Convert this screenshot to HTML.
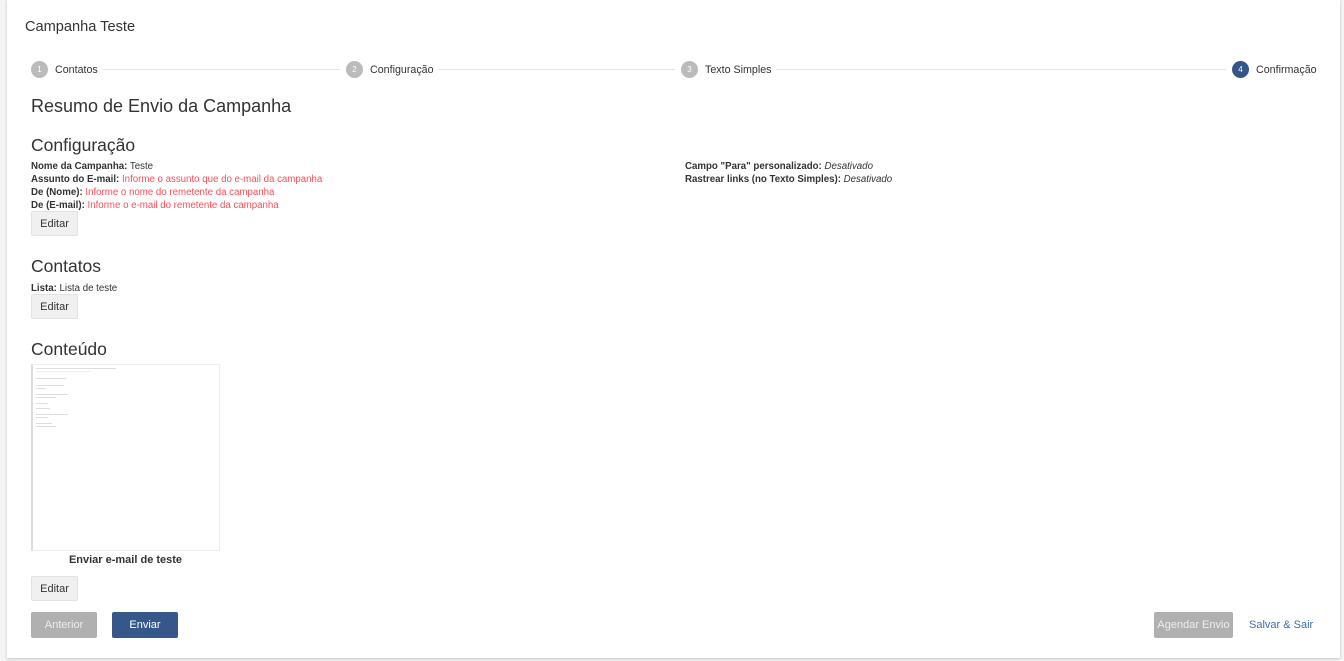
<!DOCTYPE html>
<html><head><meta charset="utf-8"><style>
*{margin:0;padding:0;box-sizing:border-box}
body{width:1344px;height:661px;background:#f4f4f4;font-family:"Liberation Sans",sans-serif;color:#333;position:relative;overflow:hidden}
.card{position:absolute;left:7px;top:0;width:1333px;height:658px;background:#fff;box-shadow:0 1px 3px rgba(0,0,0,.2)}
.a{position:absolute;white-space:nowrap}
.step{position:absolute;top:62px;height:16px;font-size:10.7px;line-height:16px}
.circ{position:absolute;top:61px;width:17px;height:17px;border-radius:50%;background:#bbb;color:#fff;font-size:8px;text-align:center;line-height:17px}
.line{position:absolute;top:69px;height:1px;background:#e3e3e3}
.f{font-size:9.7px;line-height:13px}
.f b{font-weight:bold}
.r{color:#f0525e}
.btn{position:absolute;background:#f0f0f0;border:1px solid #e2e2e2;border-radius:2px;font-size:11px;text-align:center;line-height:25px;width:47px;height:25px;color:#333}
h2{font-weight:normal;font-size:18px}
</style></head><body>
<div class="card"></div>
<div class="a" style="left:25px;top:19px;font-size:14.6px">Campanha Teste</div>

<div class="circ" style="left:31px">1</div><div class="step a" style="left:55px">Contatos</div>
<div class="line" style="left:103px;width:237px"></div>
<div class="circ" style="left:346px">2</div><div class="step a" style="left:370px">Configuração</div>
<div class="line" style="left:438px;width:237px"></div>
<div class="circ" style="left:681px">3</div><div class="step a" style="left:705px">Texto Simples</div>
<div class="line" style="left:776px;width:450px"></div>
<div class="circ" style="left:1232px;background:#34568b">4</div><div class="step a" style="left:1256px">Confirmação</div>

<div class="a" style="left:31px;top:96px;font-size:18px">Resumo de Envio da Campanha</div>
<h2 class="a" style="left:31px;top:135px;font-size:17.5px">Configuração</h2>
<div class="a f" style="left:31px;top:160px"><b>Nome da Campanha:</b> Teste<br><b>Assunto do E-mail:</b> <span class="r">Informe o assunto que do e-mail da campanha</span><br><b>De (Nome):</b> <span class="r">Informe o nome do remetente da campanha</span><br><b>De (E-mail):</b> <span class="r">Informe o e-mail do remetente da campanha</span></div>
<div class="a f" style="left:685px;top:160px"><b>Campo "Para" personalizado:</b> <i>Desativado</i><br><b>Rastrear links (no Texto Simples):</b> <i>Desativado</i></div>
<div class="btn" style="left:31px;top:211px">Editar</div>

<h2 class="a" style="left:31px;top:256px;font-size:17.5px">Contatos</h2>
<div class="a f" style="left:31px;top:282px"><b>Lista:</b> Lista de teste</div>
<div class="btn" style="left:31px;top:294px">Editar</div>

<h2 class="a" style="left:31px;top:339px;font-size:17.5px">Conteúdo</h2>
<div class="a" style="left:31px;top:364px;width:189px;height:187px;border:1px solid #eee;border-left:2px solid #ddd;background:#fff">
<div style="margin:3px 0 0 3px;width:80px;height:1px;background:#ddd"></div>
<div style="margin:2px 0 0 3px;width:55px;height:1px;background:#eee"></div>
<div style="margin:6px 0 0 3px;width:30px;height:1px;background:#ddd"></div>
<div style="margin:6px 0 0 3px;width:28px;height:1px;background:#ddd"></div>
<div style="margin:2px 0 0 3px;width:10px;height:1px;background:#ddd"></div>
<div style="margin:5px 0 0 3px;width:32px;height:1px;background:#ddd"></div>
<div style="margin:2px 0 0 3px;width:20px;height:1px;background:#ddd"></div>
<div style="margin:5px 0 0 3px;width:12px;height:1px;background:#ddd"></div>
<div style="margin:4px 0 0 3px;width:14px;height:1px;background:#ddd"></div>
<div style="margin:5px 0 0 3px;width:32px;height:1px;background:#ddd"></div>
<div style="margin:2px 0 0 3px;width:12px;height:1px;background:#ddd"></div>
<div style="margin:5px 0 0 3px;width:16px;height:1px;background:#ddd"></div>
<div style="margin:2px 0 0 3px;width:20px;height:1px;background:#ddd"></div>
</div>
<div class="a" style="left:31px;top:554px;width:189px;text-align:center;font-size:11px;font-weight:bold">Enviar e-mail de teste</div>
<div class="btn" style="left:31px;top:576px">Editar</div>

<div class="a" style="left:31px;top:612px;width:66px;height:26px;background:#b0b0b0;color:#eee;font-size:11px;text-align:center;line-height:27px;border-radius:2px">Anterior</div>
<div class="a" style="left:112px;top:612px;width:66px;height:26px;background:#36578a;color:#fff;font-size:11px;text-align:center;line-height:27px;border-radius:2px">Enviar</div>
<div class="a" style="left:1154px;top:612px;width:79px;height:26px;background:#b0b0b0;color:#eee;font-size:11px;text-align:center;line-height:27px;border-radius:2px">Agendar Envio</div>
<div class="a" style="left:1249px;top:612px;color:#3d6fa8;font-size:11px;line-height:27px">Salvar &amp; Sair</div>
</body></html>
